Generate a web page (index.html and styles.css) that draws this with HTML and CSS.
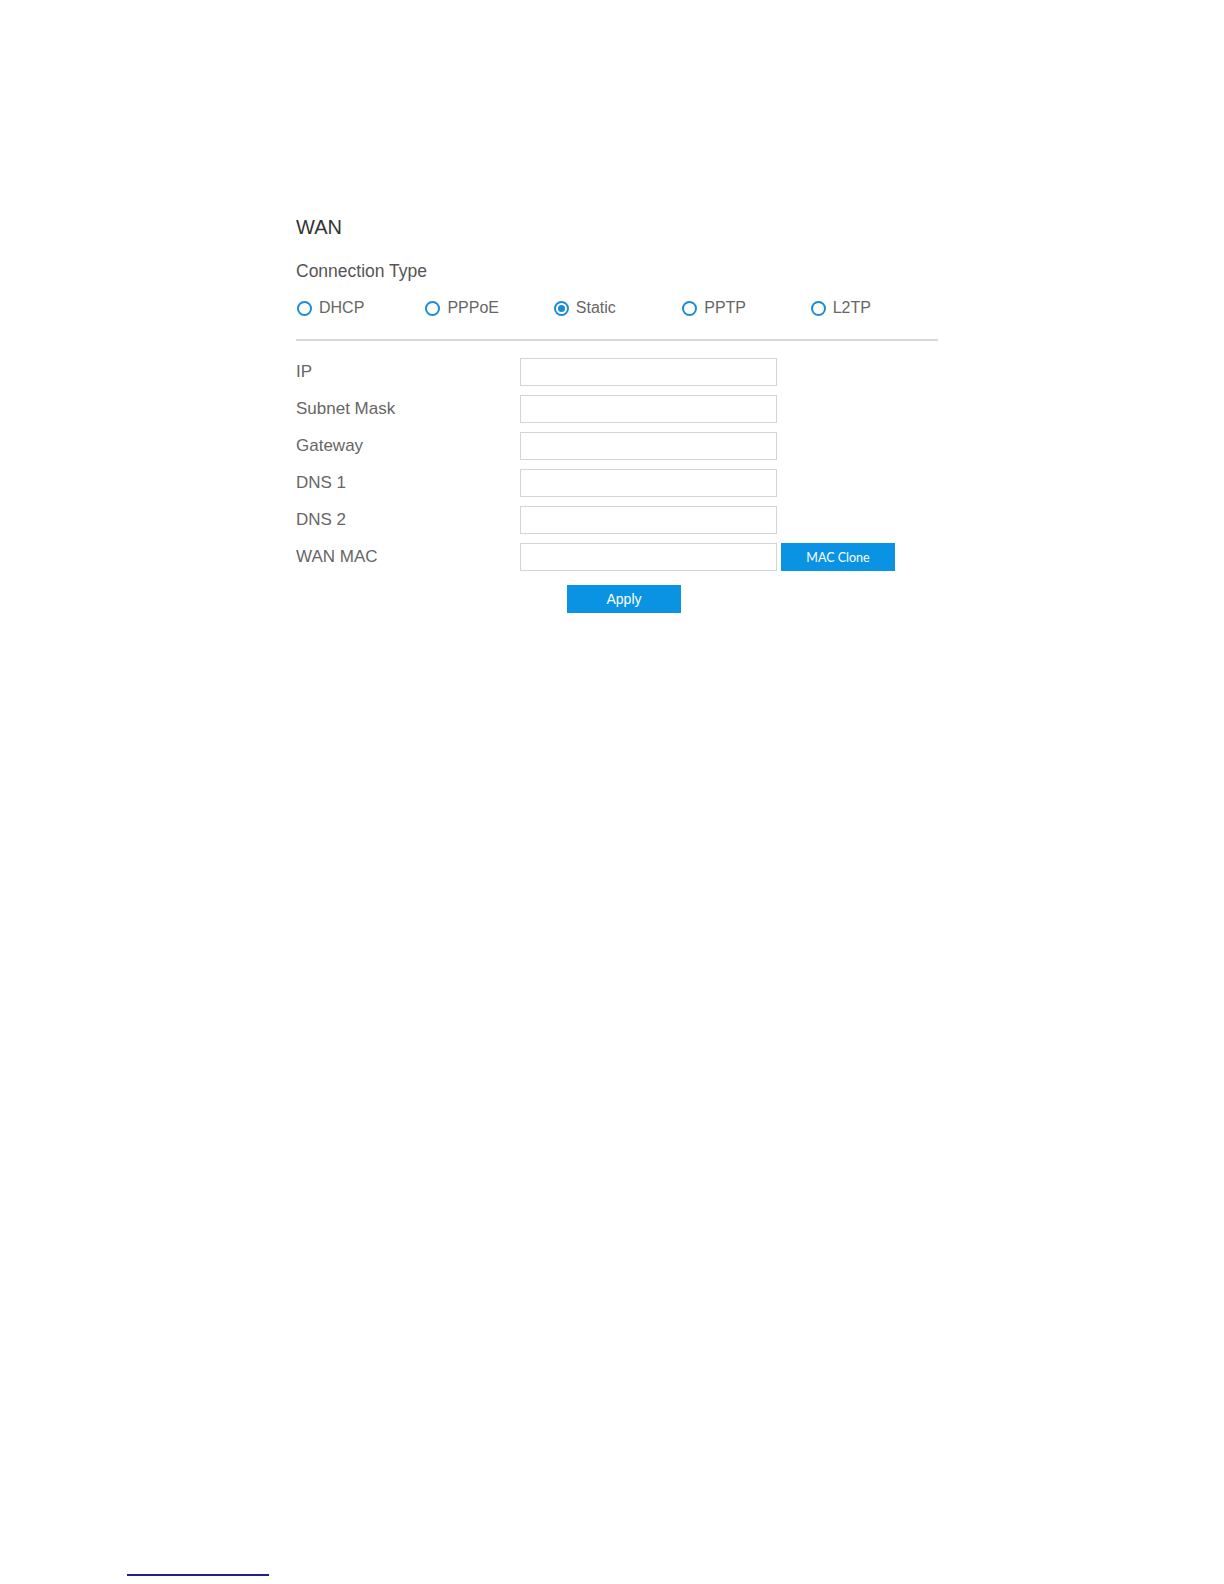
FILE: index.html
```html
<!DOCTYPE html>
<html lang="en">
<head>
    <meta charset="UTF-8">
    <meta name="viewport" content="width=device-width, initial-scale=1.0">
    <title>WAN</title>

    <!-- styling -->
    <link rel="stylesheet" href="styles.css">
</head>
<body>
    <div class="wan-panel">
        <h1 class="wan-title">WAN</h1>

        <p class="conn-label">Connection Type</p>
        <div class="conn-types">
            <label class="conn-option"><input type="radio" name="ctype" value="dhcp"> DHCP</label>
            <label class="conn-option"><input type="radio" name="ctype" value="pppoe"> PPPoE</label>
            <label class="conn-option"><input type="radio" name="ctype" value="static" checked> Static</label>
            <label class="conn-option"><input type="radio" name="ctype" value="pptp"> PPTP</label>
            <label class="conn-option"><input type="radio" name="ctype" value="l2tp"> L2TP</label>
        </div>

        <hr class="divider">

        <form action="" class="wan-form">
            <div class="form-row">
                <label for="wan-ip">IP</label>
                <input type="text" id="wan-ip" name="ip">
            </div>
            <div class="form-row">
                <label for="wan-mask">Subnet Mask</label>
                <input type="text" id="wan-mask" name="mask">
            </div>
            <div class="form-row">
                <label for="wan-gw">Gateway</label>
                <input type="text" id="wan-gw" name="gateway">
            </div>
            <div class="form-row">
                <label for="wan-dns1">DNS 1</label>
                <input type="text" id="wan-dns1" name="dns1">
            </div>
            <div class="form-row">
                <label for="wan-dns2">DNS 2</label>
                <input type="text" id="wan-dns2" name="dns2">
            </div>
            <div class="form-row">
                <label for="wan-mac">WAN MAC</label>
                <input type="text" id="wan-mac" name="mac">
                <button type="button" class="btn-clone">MAC Clone</button>
            </div>

            <button type="submit" class="btn-apply">Apply</button>
        </form>
    </div>

    <div class="footnote-line"></div>
</body>
</html>
```

FILE: styles.css
```css
body {
    margin: 0;
    min-height: 100vh;
    display: flex;
    flex-direction: column;
    background-color: #ffffff;
    font-family: "Liberation Sans", Arial, sans-serif;
    color: #666666;
}

.wan-panel {
    width: 642px;
    margin: 215px 0 0 296px;
    display: flex;
    flex-direction: column;
}

.wan-title {
    margin: 0;
    font-size: 20px;
    line-height: 24px;
    font-weight: normal;
    color: #333333;
}

.conn-label {
    margin: 21px 0 0;
    font-size: 17.5px;
    line-height: 22px;
    color: #555555;
}

.conn-types {
    display: flex;
    margin-top: 15px;
    height: 22px;
}

.conn-option {
    width: 128.75px;
    display: flex;
    align-items: center;
    gap: 7px;
    font-size: 16px;
    line-height: 22px;
    color: #666666;
    cursor: pointer;
}

.conn-option input[type="radio"] {
    appearance: none;
    -webkit-appearance: none;
    margin: 0 0 0 1px;
    width: 15px;
    height: 15px;
    border: 2px solid #1c8bd6;
    border-radius: 50%;
    box-sizing: border-box;
    display: grid;
    place-items: center;
}

.conn-option input[type="radio"]:checked::after {
    content: "";
    width: 7px;
    height: 7px;
    border-radius: 50%;
    background-color: #1c8bd6;
}

.divider {
    margin: 20px 0 0;
    border: none;
    height: 2px;
    background-color: #d9d9d9;
}

.wan-form {
    margin-top: 17px;
    display: flex;
    flex-direction: column;
    gap: 9px;
}

.form-row {
    display: flex;
    align-items: center;
    height: 28px;
}

.form-row label {
    width: 224px;
    font-size: 17px;
    color: #666666;
}

.form-row input[type="text"] {
    width: 257px;
    height: 28px;
    box-sizing: border-box;
    margin: 0;
    padding: 0 6px;
    border: 1px solid #d4d4d4;
    font-size: 14px;
}

.form-row input[type="text"]:focus {
    outline: none;
    border-color: #0b93e3;
}

.btn-clone,
.btn-apply {
    width: 114px;
    height: 28px;
    padding: 0;
    border: none;
    background-color: #0b93e3;
    color: #ffffff;
    cursor: pointer;
}

.btn-clone {
    margin-left: 4px;
    font-family: Lato, "Liberation Sans", sans-serif;
    font-size: 12.5px;
}

.btn-apply {
    margin: 5px 0 0 271px;
    font-family: "Liberation Sans", Arial, sans-serif;
    font-size: 14px;
}

.btn-clone:hover,
.btn-apply:hover {
    background-color: #0780c8;
}

.footnote-line {
    margin: auto 0 8px 127px;
    width: 142px;
    height: 2px;
    background-color: #1f1f8f;
}
```
